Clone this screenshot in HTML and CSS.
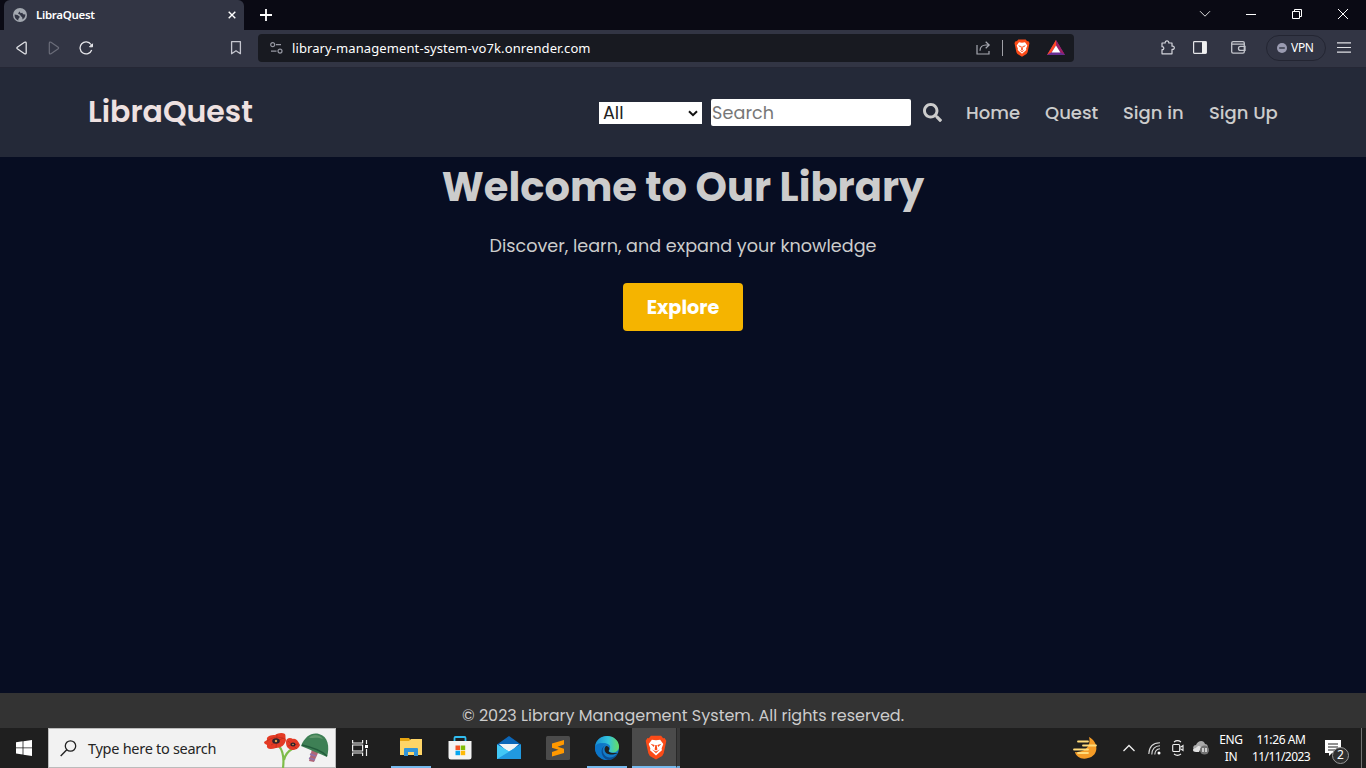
FILE: index.html
```html
<!DOCTYPE html>
<html lang="en">
<head>
<meta charset="utf-8">
<title>LibraQuest</title>
<link rel="stylesheet" href="styles.css">
</head>
<body>
<div class="screen">
  <div class="titlebar">
    <div class="tab">
      <svg class="globe" width="14" height="14" viewBox="0 0 14 14"><circle cx="7" cy="7" r="7" fill="#a3a8b0"/><path d="M1.600 6.500L4.500 7l2.200 1.500-.3 1.300L5.300 11v1.500C2.800 11.500 1.300 9.200 1.600 6.500zM7.800 1.500l-1.300 2 1.200 1.700 1.500-.5 1 1.500 2.200.3c.1 2-1.200 4-2.900 5l-.2-2L8 8.300l-1-1.500L5 5.500z" fill="#323544"/></svg>
      <span class="tab-title">LibraQuest</span>
      <svg width="8" height="8" viewBox="0 0 8 8"><path d="M.7.7l6.600 6.600M7.300.7L.7 7.300" stroke="#fff" stroke-width="1.400"/></svg>
    </div>
    <svg class="new-tab" width="12" height="12" viewBox="0 0 12 12"><path d="M6 0v12M0 6h12" stroke="#fff" stroke-width="1.800"/></svg>
    <div class="window-controls">
      <svg width="12" height="10" viewBox="0 0 12 10"><path d="M1 2.200l5 5 5-5" fill="none" stroke="#ddd"/></svg>
      <svg width="10" height="10" viewBox="0 0 10 10"><path d="M0 5.500h10" stroke="#fff"/></svg>
      <svg width="10" height="10" viewBox="0 0 10 10"><path d="M.5 2.500h7v7h-7zM2.500 2.500v-2h7v7h-2" fill="none" stroke="#fff"/></svg>
      <svg width="10" height="10" viewBox="0 0 10 10"><path d="M0 0l10 10M10 0L0 10" stroke="#fff"/></svg>
    </div>
  </div>

  <div class="toolbar">
    <svg class="back" width="14" height="16" viewBox="0 0 14 16"><path d="M9.500 2.300L2.300 7.200q-.8.8 0 1.500l7.200 5q1.500.8 1.700-.8V3.200Q11 1.500 9.500 2.300z" fill="none" stroke="#e1e2e6" stroke-width="1.300"/></svg>
    <svg class="forward" width="14" height="16" viewBox="0 0 14 16"><path d="M4 2.300l7.200 4.900q.8.8 0 1.500l-7.200 5q-1.500.8-1.700-.8V3.200Q2.500 1.500 4 2.300z" fill="none" stroke="#6a6c79" stroke-width="1.200"/></svg>
    <svg class="reload" width="15" height="15" viewBox="0 0 15 15"><path d="M12 4.500A6 6 0 1 0 12.700 10" fill="none" stroke="#e6e6ea" stroke-width="1.300"/><path d="M13.500 3.800v3h-3z" fill="#e6e6ea" stroke="#e6e6ea" stroke-linejoin="round"/></svg>
    <svg class="bookmark" width="12" height="14" viewBox="0 0 12 14"><path d="M1.600.7h8.800v12L6 9.800l-4.400 2.900z" fill="none" stroke="#c5c6cf" stroke-width="1.300" stroke-linejoin="round"/></svg>
    <div class="address">
      <svg width="13" height="12" viewBox="0 0 13 12"><g fill="none" stroke="#9698a2" stroke-width="1.200"><circle cx="2.700" cy="2.700" r="2"/><path d="M6 2.700h5M1 9.100h5.500"/><circle cx="10" cy="9.100" r="2"/></g></svg>
      <span class="url">library-management-system-vo7k.onrender.com</span>
      <svg class="share" width="15" height="15" viewBox="0 0 15 15"><g fill="none" stroke="#a7a9b2" stroke-width="1.200"><path d="M1 5v9h12v-3M4 10.800C4 7 6.500 5 10 5h3M9.700 1.700L13.200 5 9.700 8.300"/></g></svg>
      <span class="separator"></span>
      <svg width="16" height="18" viewBox="0 0 16 18"><use href="#lion"/></svg>
      <svg class="bat" width="18" height="15" viewBox="0 0 18 15"><path d="M9 0l9 15H0z" fill="#662d91"/><path d="M9 0v5.500L4.500 12.500 0 15z" fill="#ff4724"/><path d="M9 0l9 15-4.500-2.500L9 5.500z" fill="#9e1f63"/><path d="M0 15l4.500-2.500h9L18 15z" fill="#662d91"/><path d="M9 5.500l4.400 7H4.600z" fill="#fff"/></svg>
    </div>
    <svg class="puzzle" width="15" height="15" viewBox="0 0 15 15"><path d="M2 3h3.200C5 1.500 6 .8 7 .8S9 1.500 8.800 3H12v3.200c2-.3 2.300.8 2.300 1.600S13.700 9.700 12 9.300V13.800H2V9.700C3.400 9.800 3.800 9 3.800 8.200S3.400 6.500 2 6.600z" fill="none" stroke="#d4d5dc" stroke-width="1.200" stroke-linejoin="round"/></svg>
    <svg class="sidebar" width="14" height="13" viewBox="0 0 14 13"><rect x=".6" y=".6" width="12.800" height="11.800" rx=".8" fill="none" stroke="#e5e5e8" stroke-width="1.200"/><path d="M9 1h4v11H9z" fill="#f0f0f0"/></svg>
    <svg class="wallet" width="15" height="13" viewBox="0 0 15 13"><g fill="none" stroke="#c3c5cc" stroke-width="1.300"><rect x=".7" y=".7" width="12.600" height="11.500" rx="1.400"/><path d="M1 3.200h12.500M14 5.400H9.500a2 2 0 0 0 0 4H14z"/></g></svg>
    <div class="vpn"><svg width="10" height="10" viewBox="0 0 10 10"><circle cx="5" cy="5" r="5" fill="#9a9bb1"/><path d="M2.200 5h5.600" stroke="#323544" stroke-width="1.400"/></svg><span>VPN</span></div>
    <svg class="menu" width="14" height="11" viewBox="0 0 14 11"><path d="M0 .8h14M0 5.500h14M0 10.200h14" stroke="#dfe0e4" stroke-width="1.200"/></svg>
  </div>

  <div class="page">
    <header class="site-header">
      <div class="brand">LibraQuest</div>
      <div class="select"><span>All</span><svg width="10" height="7" viewBox="0 0 10 7"><path d="M1 1.200l4 4 4-4" fill="none" stroke="#111" stroke-width="2"/></svg></div>
      <div class="search-field">Search</div>
      <svg class="search-icon" width="19" height="19" viewBox="0 0 512 512"><path fill="#ccc" d="M505 442.700L405.300 343c-4.500-4.500-10.600-7-17-7H372c27.600-35.300 44-79.700 44-128C416 93.100 322.900 0 208 0S0 93.100 0 208s93.100 208 208 208c48.300 0 92.700-16.400 128-44v16.300c0 6.400 2.500 12.500 7 17l99.700 99.700c9.400 9.400 24.600 9.400 33.900 0l28.300-28.300c9.400-9.400 9.400-24.600.1-34zM208 336c-70.700 0-128-57.200-128-128 0-70.700 57.200-128 128-128 70.700 0 128 57.200 128 128 0 70.700-57.200 128-128 128z"/></svg>
      <nav class="nav"><span class="home">Home</span><span class="quest">Quest</span><span class="signin">Sign in</span><span class="signup">Sign Up</span></nav>
    </header>
    <main class="hero">
      <h1>Welcome to Our Library</h1>
      <p>Discover, learn, and expand your knowledge</p>
      <div class="explore"><span>Explore</span></div>
    </main>
    <footer class="footer"><span>© 2023 Library Management System. All rights reserved.</span></footer>
  </div>

  <div class="taskbar">
    <div class="start"><svg width="16" height="16" viewBox="0 0 16 16"><path fill="#fff" d="M0 2.200L6.600 1.300v6.200H0zM7.400 1.200L16 0v7.500H7.400zM0 8.300h6.600v6.200L0 13.600zM7.400 8.300H16V16l-8.600-1.200z"/></svg></div>
    <div class="task-search">
      <svg class="lens" width="17" height="17" viewBox="0 0 17 17"><circle cx="10.500" cy="6" r="5.200" fill="none" stroke="#222" stroke-width="1.300"/><path d="M6.800 9.700L.7 15.900" stroke="#222" stroke-width="1.400"/></svg>
      <span>Type here to search</span>
      <svg class="poppy" width="66" height="36" viewBox="0 0 66 36">
        <path d="M15 14c5 6 5 14 4 22M28 17c-5 3-7 6-8 11" fill="none" stroke="#7ebc49" stroke-width="2.200"/>
        <path d="M0 10l3-2c-1-4 4-5 8-5 3-2 7-3 10-1 1 2 0 4 1 6-1 5-5 8-10 8-6 2-10 1-9-3-1-1-3-1-3-3z" fill="#e43b25"/><path d="M3 9c5-4 12-5 18-2M7 13l12-7M13 2l-1 14" stroke="#c12c1b" stroke-width=".8" fill="none"/><ellipse cx="12" cy="9" rx="3.800" ry="2.700" fill="#30252b"/><circle cx="12" cy="9" r="1.200" fill="#e2a34e"/>
        <path d="M22 10c0-4 4-5 7-3 3-1 5 2 7 6-1 3-4 5-8 5-4-1-6-3-6-8z" fill="#e33b25"/><path d="M24 9l9 8M34 12l-10 2" stroke="#c12c1b" stroke-width=".8"/><ellipse cx="29" cy="12.500" rx="2.600" ry="2" fill="#30252b"/><circle cx="29" cy="12.500" r=".8" fill="#e2a34e"/>
        <path d="M48 17l5 2 1 2-4 9-5-1z" fill="#b16576"/><path d="M46 22l6 2M45 26l6 2" stroke="#8f71ac" stroke-width="1.600"/>
        <path d="M37 14C41 4 48 0 55 2c9 2 11 13 8 23-7-3-16-7-26-11z" fill="#3e8055"/><path d="M45 6c4-5 11-3 14 1-5-2-9-1-14-1z" fill="#62986d"/><path d="M38 13c9 2 20 6 25 11" fill="none" stroke="#225c3c" stroke-width="1.300"/>
      </svg>
    </div>
    <div class="task-view"><svg width="17" height="16" viewBox="0 0 17 16"><path d="M.6 0v3h10V0M.6 16v-3h10v3M.6 5h10v6H.6zM14.500 0v4M14.500 9v7" fill="none" stroke="#eee" stroke-width="1.200"/><path d="M13 5h3v3h-3z" fill="#fff"/></svg></div>
    <div class="apps">
      <div class="app running"><svg width="22" height="20" viewBox="0 0 22 20"><path d="M0 1h9l2 3h10v14H0z" fill="#e7a511"/><path d="M0 4h9l2-2h11v16H0z" fill="#ffd567"/><path d="M4 19v-7q0-1 1-1h12q1 0 1 1v7h-4v-4H8v4z" fill="#3395d8"/></svg></div>
      <div class="app store"><svg width="24" height="24" viewBox="0 0 24 24"><path d="M6.500 6V2q0-1 1-1h9q1 0 1 1v4" fill="none" stroke="#31bdf0" stroke-width="1.800"/><path d="M.5 5h23v16q0 2.500-2.500 2.500H3Q.5 23.500.5 21z" fill="#f4f4f4"/><path fill="#f35325" d="M7.500 9.500H12V14H7.500z"/><path fill="#81bc06" d="M12.700 9.500h4.500V14h-4.500z"/><path fill="#05a6f0" d="M7.500 14.700H12v4.500H7.500z"/><path fill="#ffba08" d="M12.700 14.700h4.500v4.500h-4.500z"/></svg></div>
      <div class="app"><svg width="24" height="23" viewBox="0 0 24 23"><path d="M0 8.500L12 0l12 8.500V14H0z" fill="#0b66b8"/><path d="M2 8h20l-10 9z" fill="#f0f3f5"/><path d="M0 8.500l12 7 12-7V23H0z" fill="#33baf1"/><path d="M24 8.500V23H0z" fill="#2199df"/><path d="M0 8.500l12 7L0 23z" fill="#42c8f6"/></svg></div>
      <div class="app sublime"><svg width="24" height="24" viewBox="0 0 24 24"><rect width="24" height="24" rx="1.500" fill="#4b4b4b"/><path d="M18 4v4.500l-6.500 2.200 6.500 2V17L6 20.500V16l6.500-2.200L6 11.700V7.500z" fill="#ff9800"/></svg></div>
      <div class="app running edge"><svg width="24" height="24" viewBox="0 0 24 24"><defs><linearGradient id="edge-top" x2="1"><stop stop-color="#168ed3"/><stop offset=".55" stop-color="#34c4dc"/><stop offset="1" stop-color="#67de61"/></linearGradient></defs><circle cx="12" cy="12" r="12" fill="#137bc8"/><path d="M.2 10C1 4 6 0 12 0c7 0 12 5 12 10.500 0 4-3 6-6.500 6-3 0-4.300-1-3-2.500 2.500-5-2-7-6-7-4 0-7 2-8.300 3z" fill="url(#edge-top)"/><path d="M9 8.200C5 11 6 20 14 23.800 7 25 0 19 0 12c1-5 6-5.500 9-3.800z" fill="#0c75c8"/><path d="M10.500 9c-5 3-3 12 4 12.500 3 .2 6-1.500 8-4C20 22 17 24 13 24 6 22 4 12 10.500 9z" fill="#0c4d91"/><path d="M11 10c-3 3-1 8 4 8.500 3 .3 6-.6 8-1.500-4 0-8.500.5-9.500-2 2-2.500 0-5-2.500-5z" fill="#202020"/></svg></div>
      <div class="app active"><svg width="22" height="25" viewBox="0 0 16 18"><use href="#lion"/></svg></div>
      <span class="stack"></span>
    </div>
    <div class="tray">
      <svg class="weather" width="25" height="22" viewBox="0 0 25 22"><path d="M16 0c10 5 10 19-1 21C9 23 3 20 2 15c7 1 17-4 14-15z" fill="#f59c27"/><path d="M5 4.500h10M10 8.500h13M1 12.500h14M5 16h10" stroke="#ffdc7b" stroke-width="1.800" stroke-linecap="round"/></svg>
      <svg class="chevron" width="12" height="8" viewBox="0 0 12 8"><path d="M.5 7L6 1.500 11.500 7" fill="none" stroke="#eee" stroke-width="1.300"/></svg>
      <svg class="wifi" width="13" height="13" viewBox="0 0 13 13"><g fill="none" stroke="#d8d8d8" stroke-width="1.100"><path d="M.8 12C1 5 5 1 12 .8M3.800 12.500C4 7 7 4 12 3.800M6.800 12.500C7 9 9 7 12 6.800"/></g><circle cx="11" cy="11" r="1.500" fill="#fff"/></svg>
      <svg class="camera" width="12" height="16" viewBox="0 0 12 16"><g fill="none" stroke="#f0f0f0" stroke-width="1.100"><rect x=".7" y="4.500" width="7" height="7" rx="1"/><path d="M7.700 7h1.300L11 5.500v5L9 9H7.700M2 2c2-1.500 5-1.500 7 0M2 14c2 1.500 5 1.500 7 0"/></g></svg>
      <svg class="cloud" width="17" height="14" viewBox="0 0 17 14"><path d="M3 9C-1 9-.5 4 3 4c2-5 8-5 9-1 3 0 3 3 3 6z" fill="#aaa"/><path d="M6 11H3C-1 11-1 7 3 7c2-3 5-2 5 0z" fill="#e0e0e0"/><circle cx="11.500" cy="9" r="4.600" fill="#737373"/><path d="M10 7v4M13 7v4" stroke="#fff" stroke-width="1.300"/></svg>
      <div class="language"><span class="eng">ENG</span><span class="region">IN</span></div>
      <div class="clock"><span class="time">11:26 AM</span><span class="date">11/11/2023</span></div>
      <div class="notice"><svg width="16" height="16" viewBox="0 0 16 16"><path d="M0 0h16v13H7l-3 3v-3H0z" fill="#fff"/><path d="M3 4h10M3 7h10M3 10h7" stroke="#222" stroke-width="1.200"/></svg><span class="badge">2</span></div>
      <span class="desktop-edge"></span>
    </div>
  </div>
</div>
<svg class="symbols" width="0" height="0"><defs><g id="lion"><path d="M4.300.5h7.400l1.500 1.700 1-.2 1.300 2-.4 2-1.500 7.200-1.100 1.900L8 17.800l-4.500-2.700-1.100-1.900L.9 6l-.4-2 1.300-2 1 .2z" fill="#fb4b18"/><path d="M5 3.300l3 .5 3-.5 2.300 3.200-1.200 3.100.2 1.400L8 14.800 3.700 11l.2-1.400-1.200-3.100z" fill="#fff"/><path d="M4 6.300l3 .8-.6 1.500zM12 6.300l-3 .8.600 1.500zM7.500 7.200h1l.5 3.300-1 .7-1-.7zM5.200 10.500L8 11.900l2.800-1.400L8 13.200z" fill="#fb4b18"/></g></defs></svg>
</body>
</html>
```
FILE: styles.css
```css
* { box-sizing: border-box; }
body { margin: 0; overflow: hidden; font-family: "Segoe UI", "Noto Sans", "Open Sans", sans-serif; }
svg { display: block; flex-shrink: 0; }
span, h1, p { white-space: nowrap; }
.symbols { position: absolute; }
.screen { width: 1366px; height: 768px; display: flex; flex-direction: column; background: #070d22; }

.titlebar { height: 30px; background: #0a0a14; display: flex; align-items: center; }
.tab { width: 240px; height: 30px; margin-left: 4px; padding: 0 8px 0 9px; background: #323544; border-radius: 6px 6px 0 0; display: flex; align-items: center; }
.tab-title { flex: 1; margin-left: 9px; padding-bottom: 1px; color: #fff; font-size: 11.5px; font-weight: 600; letter-spacing: -.3px; }
.new-tab { margin-left: 16px; }
.window-controls { margin-left: auto; margin-right: 18px; display: flex; align-items: center; gap: 36px; margin-top: -2px; }
.window-controls svg:first-child { margin-right: -1px; }

.toolbar { height: 38px; background: #323544; border-bottom: 1px solid #252735; display: flex; align-items: center; padding-bottom: 2px; }
.back { margin-left: 15px; }
.forward { margin-left: 18px; }
.reload { margin-left: 18px; }
.bookmark { margin-left: 136px; }
.address { width: 816px; height: 28px; margin-left: 16px; padding: 0 9px 0 12px; border-radius: 4px; background: #181a21; display: flex; align-items: center; }
.url { flex: 1; margin-left: 9px; color: #fff; font-size: 13px; letter-spacing: .1px; }
.separator { width: 1px; height: 16px; margin: 0 11px 0 11px; background: #a0a1a7; }
.bat { margin-left: 17px; }
.puzzle { margin-left: 86px; }
.sidebar { margin-left: 18px; }
.wallet { margin-left: 24px; }
.vpn { width: 60px; height: 26px; margin-left: 20px; padding-left: 10px; border: 1px solid #232532; border-radius: 13px; display: flex; align-items: center; gap: 4px; color: #fff; font-size: 12px; letter-spacing: -.3px; }
.menu { margin-left: 11px; }

.page { flex: 1; display: flex; flex-direction: column; font-family: Poppins, Inter, sans-serif; }
.site-header { height: 89px; padding: 0 88px; background: #242938; display: flex; align-items: center; }
.brand { width: 511px; color: #eee1e1; font-size: 30px; font-weight: 600; line-height: 36px; padding-bottom: 2px; }
.select { width: 103px; height: 22px; padding: 0 4px; background: #fff; display: flex; align-items: center; justify-content: space-between; font-size: 17.6px; color: #222; margin-top: 1px; }
.select span { height: 26px; line-height: 27px; }
.search-field { width: 200px; height: 27px; margin-left: 9px; padding-left: 1px; border-radius: 2px; background: #fff; color: #777; font-size: 17.6px; line-height: 29px; letter-spacing: .1px; }
.search-icon { margin-left: 12px; }
.nav { flex: 1; margin-left: 24px; display: flex; color: #ccc; font-size: 18px; font-weight: 500; line-height: 24px; }
.home { width: 79px; }
.quest { width: 78px; }
.signin { width: 86px; }
.hero { flex: 1; display: flex; flex-direction: column; align-items: center; color: #ccc; }
.hero h1 { margin: 0; font-size: 40px; line-height: 60px; font-weight: 700; }
.hero p { margin: 16px 0 0; font-size: 17.6px; line-height: 27px; }
.explore { width: 120px; height: 48px; margin-top: 23px; border-radius: 4px; background: #f5b400; color: #fff; font-size: 19.2px; font-weight: 700; display: flex; align-items: center; justify-content: center; }
.footer { height: 35px; background: #333; color: #ccc; display: flex; justify-content: center; font-size: 16px; line-height: 24px; padding-top: 11px; }

.taskbar { height: 40px; background: #1f1f1f; display: flex; align-items: stretch; }
.start { width: 48px; display: flex; align-items: center; justify-content: center; }
.task-search { width: 288px; background: #f2f2f2; border: 1px solid #bbb; display: flex; align-items: center; padding-left: 11px; color: #252525; font-size: 14.5px; letter-spacing: -.28px; }
.lens { margin-right: 11px; }
.task-search span { width: 176px; }
.poppy { align-self: flex-end; margin-bottom: -1px; }
.task-view { width: 48px; display: flex; align-items: center; justify-content: center; }
.apps { display: flex; padding-left: 7px; }
.app { width: 40px; margin-right: 9px; display: flex; align-items: center; justify-content: center; border-bottom: 2px solid transparent; }
.store, .sublime, .edge { padding-top: 2px; }
.running { border-color: #76b9ed; }
.active { width: 44px; margin: 0 0 0 -4px; background: #4b4b4b; border-color: #76b9ed; }
.active svg { margin-left: 3px; }
.stack { width: 4px; background: #393939; border-left: 1px solid #292929; border-bottom: 2px solid #6ba5d2; }
.tray { flex: 1; display: flex; align-items: center; color: #fff; font-size: 12px; }
.weather { margin-left: 393px; }
.chevron { margin-left: 25px; }
.wifi { margin-left: 13px; }
.camera { margin-left: 11px; }
.cloud { margin-left: 9px; }
.language { width: 24px; margin-left: 9px; display: flex; flex-direction: column; align-items: center; line-height: 17px; letter-spacing: -.3px; }
.clock { width: 60px; margin-left: 8px; display: flex; flex-direction: column; align-items: center; line-height: 17px; }
.time { letter-spacing: -.4px; }
.date { letter-spacing: -.6px; }
.notice { position: relative; margin-left: 14px; }
.badge { position: absolute; left: 7px; top: 7px; width: 17px; height: 17px; border: 1px solid #999; border-radius: 50%; background: #303030; font-size: 12px; line-height: 14px; text-align: center; }
.desktop-edge { width: 1px; height: 40px; margin-left: auto; margin-right: 4px; background: #727272; }
```
